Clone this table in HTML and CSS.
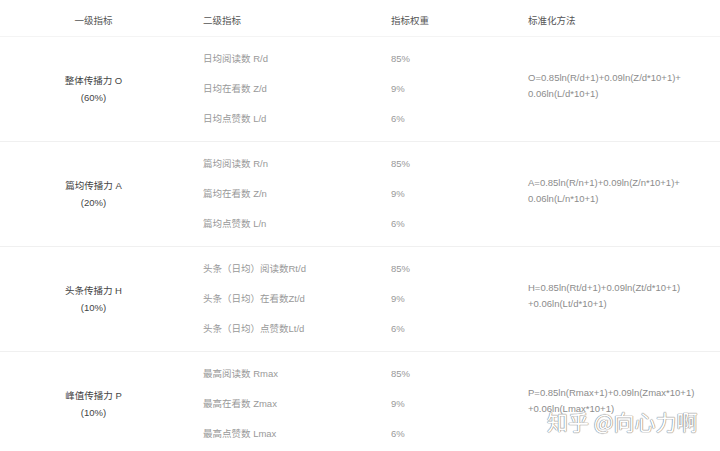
FILE: index.html
```html
<!DOCTYPE html>
<html lang="zh">
<head>
<meta charset="utf-8">
<link rel="stylesheet" href="styles.css">
</head>
<body>
<div class="page">
<table class="tbl">
  <colgroup>
    <col class="c1"><col class="c2"><col class="c3"><col class="c4">
  </colgroup>
  <thead>
    <tr>
      <th class="h1">一级指标</th>
      <th>二级指标</th>
      <th>指标权重</th>
      <th>标准化方法</th>
    </tr>
  </thead>
  <tbody>
    <tr>
      <td class="lvl1">整体传播力 O<br>(60%)</td>
      <td class="subs"><div>日均阅读数 R/d</div><div>日均在看数 Z/d</div><div>日均点赞数 L/d</div></td>
      <td class="subs"><div>85%</div><div>9%</div><div>6%</div></td>
      <td class="formula">O=0.85ln(R/d+1)+0.09ln(Z/d*10+1)+<br>0.06ln(L/d*10+1)</td>
    </tr>
    <tr>
      <td class="lvl1">篇均传播力 A<br>(20%)</td>
      <td class="subs"><div>篇均阅读数 R/n</div><div>篇均在看数 Z/n</div><div>篇均点赞数 L/n</div></td>
      <td class="subs"><div>85%</div><div>9%</div><div>6%</div></td>
      <td class="formula">A=0.85ln(R/n+1)+0.09ln(Z/n*10+1)+<br>0.06ln(L/n*10+1)</td>
    </tr>
    <tr>
      <td class="lvl1">头条传播力 H<br>(10%)</td>
      <td class="subs"><div>头条（日均）阅读数Rt/d</div><div>头条（日均）在看数Zt/d</div><div>头条（日均）点赞数Lt/d</div></td>
      <td class="subs"><div>85%</div><div>9%</div><div>6%</div></td>
      <td class="formula">H=0.85ln(Rt/d+1)+0.09ln(Zt/d*10+1)<br>+0.06ln(Lt/d*10+1)</td>
    </tr>
    <tr>
      <td class="lvl1">峰值传播力 P<br>(10%)</td>
      <td class="subs"><div>最高阅读数 Rmax</div><div>最高在看数 Zmax</div><div>最高点赞数 Lmax</div></td>
      <td class="subs"><div>85%</div><div>9%</div><div>6%</div></td>
      <td class="formula">P=0.85ln(Rmax+1)+0.09ln(Zmax*10+1)<br>+0.06ln(Lmax*10+1)</td>
    </tr>
  </tbody>
</table>
<div class="watermark">知乎 @向心力啊</div>
</div>
</body>
</html>
```
FILE: styles.css
```css
html, body {
  margin: 0;
  padding: 0;
  background: #fff;
}
body {
  font-family: "Liberation Sans", "Noto Sans CJK SC", sans-serif;
  font-size: 9.5px;
  color: #999;
  overflow: hidden;
}
.page {
  position: relative;
  width: 720px;
  height: 451px;
  overflow: hidden;
}
.tbl {
  width: 720px;
  border-collapse: collapse;
  table-layout: fixed;
}
.c1 { width: 187px; }
.c2 { width: 188px; }
.c3 { width: 137px; }
.c4 { width: 208px; }
.tbl th {
  height: 36px;
  padding: 6px 0 0 16px;
  box-sizing: border-box;
  text-align: left;
  font-weight: normal;
  color: #555;
  line-height: 16px;
  border-bottom: 1px solid #f4f4f4;
}
.tbl th.h1 {
  text-align: center;
  padding-left: 0;
}
.tbl td {
  vertical-align: middle;
  padding: 0 0 0 16px;
  border-bottom: 1px solid #f0f0f0;
}
.tbl td.lvl1 {
  text-align: center;
  padding: 0;
  color: #444;
  line-height: 17px;
}
.tbl td.subs {
  padding-top: 7px;
  padding-bottom: 7px;
}
.subs div {
  height: 30px;
  line-height: 30px;
  white-space: nowrap;
}
.tbl td.formula {
  line-height: 16px;
  padding-bottom: 6px;
  color: #8c8c8c;
}
.watermark {
  position: absolute;
  left: 547px;
  top: 406px;
  font-family: "Noto Sans CJK SC", sans-serif;
  font-size: 21px;
  line-height: 30px;
  color: #fff;
  text-shadow: 0 0 1px #8a8a8a, 0 0 1px #8a8a8a, 0 0 1px #8a8a8a;
  white-space: nowrap;
}
```
